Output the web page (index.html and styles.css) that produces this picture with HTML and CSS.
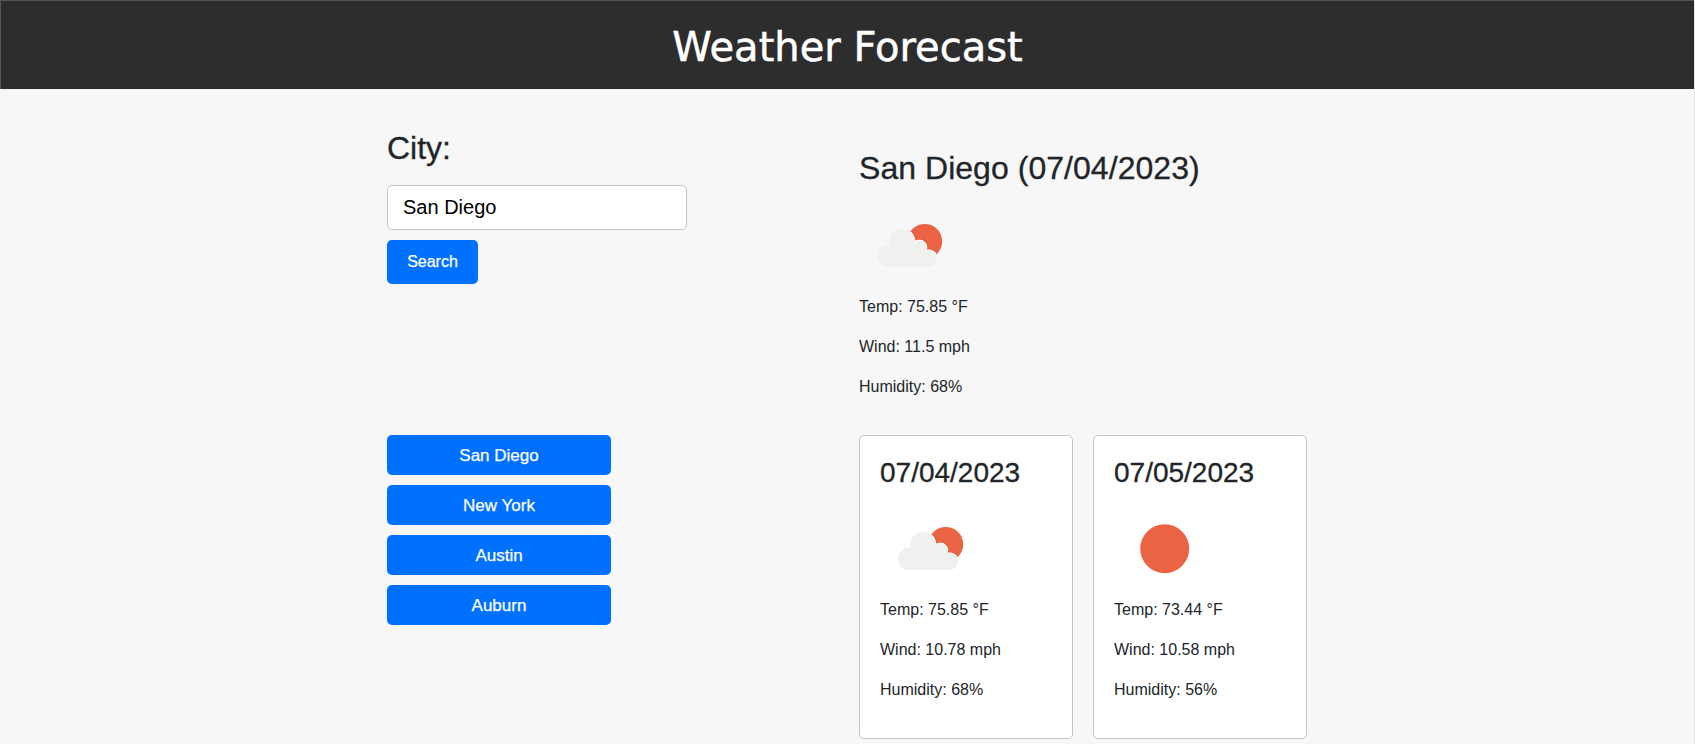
FILE: index.html
```html
<!DOCTYPE html>
<html lang="en">
<head>
<meta charset="utf-8">
<title>Weather Forecast</title>
<link rel="stylesheet" href="styles.css">
</head>
<body>
<svg class="symbols" aria-hidden="true">
  <defs>
    <clipPath id="sun-disc"><circle cx="65.8" cy="45.5" r="17.6"/></clipPath>
  </defs>
  <symbol id="partly-cloudy" viewBox="0 -0.8 100 100">
    <circle cx="65.8" cy="45.5" r="17.4" fill="#ea6342"/>
    <g clip-path="url(#sun-disc)">
      <g fill="#e84a22">
        <circle cx="42.8" cy="45.8" r="14.3"/><circle cx="60.4" cy="51.8" r="8.8"/><circle cx="69.6" cy="62.8" r="10.2"/>
      </g>
      <g fill="#fff">
        <circle cx="42.8" cy="45.8" r="13.6"/><circle cx="60.4" cy="51.8" r="8"/><circle cx="69.6" cy="62.8" r="9.4"/>
      </g>
    </g>
    <g fill="#f0f0ee">
      <circle cx="29.3" cy="59.9" r="11.3"/><circle cx="42.8" cy="45.8" r="12.5"/><circle cx="60.4" cy="51.8" r="6.9"/><circle cx="69.6" cy="62.8" r="8.4"/>
      <path d="M29 50h37l4 8v13.2H29z"/>
    </g>
  </symbol>
  <symbol id="clear-sky" viewBox="0 0 100 100">
    <circle cx="50.7" cy="50.7" r="24.5" fill="#ea6342"/>
  </symbol>
</svg>
<header class="header"><h1 class="title">Weather Forecast</h1></header>
<main class="content">
  <form class="search">
    <label class="label" for="city">City:</label>
    <input class="city-input" id="city" type="text" value="San Diego">
    <button class="button search-button" type="button">Search</button>
  </form>
  <section class="current">
    <h2 class="heading">San Diego (07/04/2023)</h2>
    <svg class="icon"><use href="#partly-cloudy"/></svg>
    <p class="reading">Temp: 75.85 °F</p>
    <p class="reading">Wind: 11.5 mph</p>
    <p class="reading">Humidity: 68%</p>
  </section>
  <nav class="history">
    <button class="button history-button" type="button">San Diego</button>
    <button class="button history-button" type="button">New York</button>
    <button class="button history-button" type="button">Austin</button>
    <button class="button history-button" type="button">Auburn</button>
  </nav>
  <section class="forecast">
    <article class="card">
      <h3 class="card-date">07/04/2023</h3>
      <svg class="icon"><use href="#partly-cloudy"/></svg>
      <p class="reading">Temp: 75.85 °F</p>
      <p class="reading">Wind: 10.78 mph</p>
      <p class="reading">Humidity: 68%</p>
    </article>
    <article class="card">
      <h3 class="card-date">07/05/2023</h3>
      <svg class="icon"><use href="#clear-sky"/></svg>
      <p class="reading">Temp: 73.44 °F</p>
      <p class="reading">Wind: 10.58 mph</p>
      <p class="reading">Humidity: 56%</p>
    </article>
  </section>
</main>
</body>
</html>
```
FILE: styles.css
```css
* { box-sizing: border-box; }

body {
  margin: 0;
  min-height: 744px;
  border-right: 1px solid #e4e4e4;
  background: #f7f7f7;
  color: #212529;
  font: 16px/24px "Liberation Sans", Arial, sans-serif;
}

.symbols {
  position: absolute;
  width: 0;
  height: 0;
}

.header {
  height: 89px;
  padding-top: 22px;
  border-top: 1px solid #55565a;
  border-left: 1px solid #55565a;
  background: #2d2d2d;
  text-align: center;
}

.title {
  margin: 0;
  color: #fff;
  font: 400 40px/48px "DejaVu Sans", Verdana, sans-serif;
  -webkit-text-stroke: 0.5px #fff;
}

.content {
  display: grid;
  grid-template-columns: 300px 448px;
  grid-template-rows: 326px auto;
  column-gap: 172px;
  row-gap: 20px;
  width: 920px;
  margin-left: 387px;
}

.search {
  display: flex;
  flex-direction: column;
  align-items: flex-start;
  padding-top: 40px;
}

.label {
  margin-bottom: 18px;
  font-size: 32px;
  line-height: 38px;
  -webkit-text-stroke: 0.3px;
}

.city-input {
  width: 300px;
  height: 45px;
  margin-bottom: 10px;
  padding: 0 15px;
  border: 1px solid #c4c4c4;
  border-radius: 5px;
  background: #fff;
  color: #000;
  font: 20px "Liberation Sans", Arial, sans-serif;
}

.button {
  height: 40px;
  padding: 0;
  border: 0;
  border-radius: 5px;
  background: #0070ff;
  color: #fff;
  font: 17px "Liberation Sans", Arial, sans-serif;
  -webkit-text-stroke: 0.25px;
}

.search-button {
  width: 91px;
  height: 44px;
  font-size: 16px;
}

.history-button { padding-top: 2px; }

.current { padding-top: 60px; }

.heading {
  margin: 0 0 8px;
  font-size: 32px;
  font-weight: 400;
  line-height: 38.4px;
  letter-spacing: 0.04px;
  -webkit-text-stroke: 0.3px;
}

.icon {
  display: block;
  width: 100px;
  height: 100px;
}

.reading { margin: 0 0 16px; }

.history {
  display: flex;
  flex-direction: column;
  gap: 10px;
  width: 224px;
}

.forecast {
  display: flex;
  gap: 20px;
}

.card {
  width: 214px;
  height: 304px;
  padding: 20px;
  border: 1px solid #c4c4c4;
  border-radius: 5px;
  background: #fff;
}

.card-date {
  margin: 0 0 8px;
  font-size: 28px;
  font-weight: 400;
  line-height: 33.6px;
  -webkit-text-stroke: 0.3px;
}
```
